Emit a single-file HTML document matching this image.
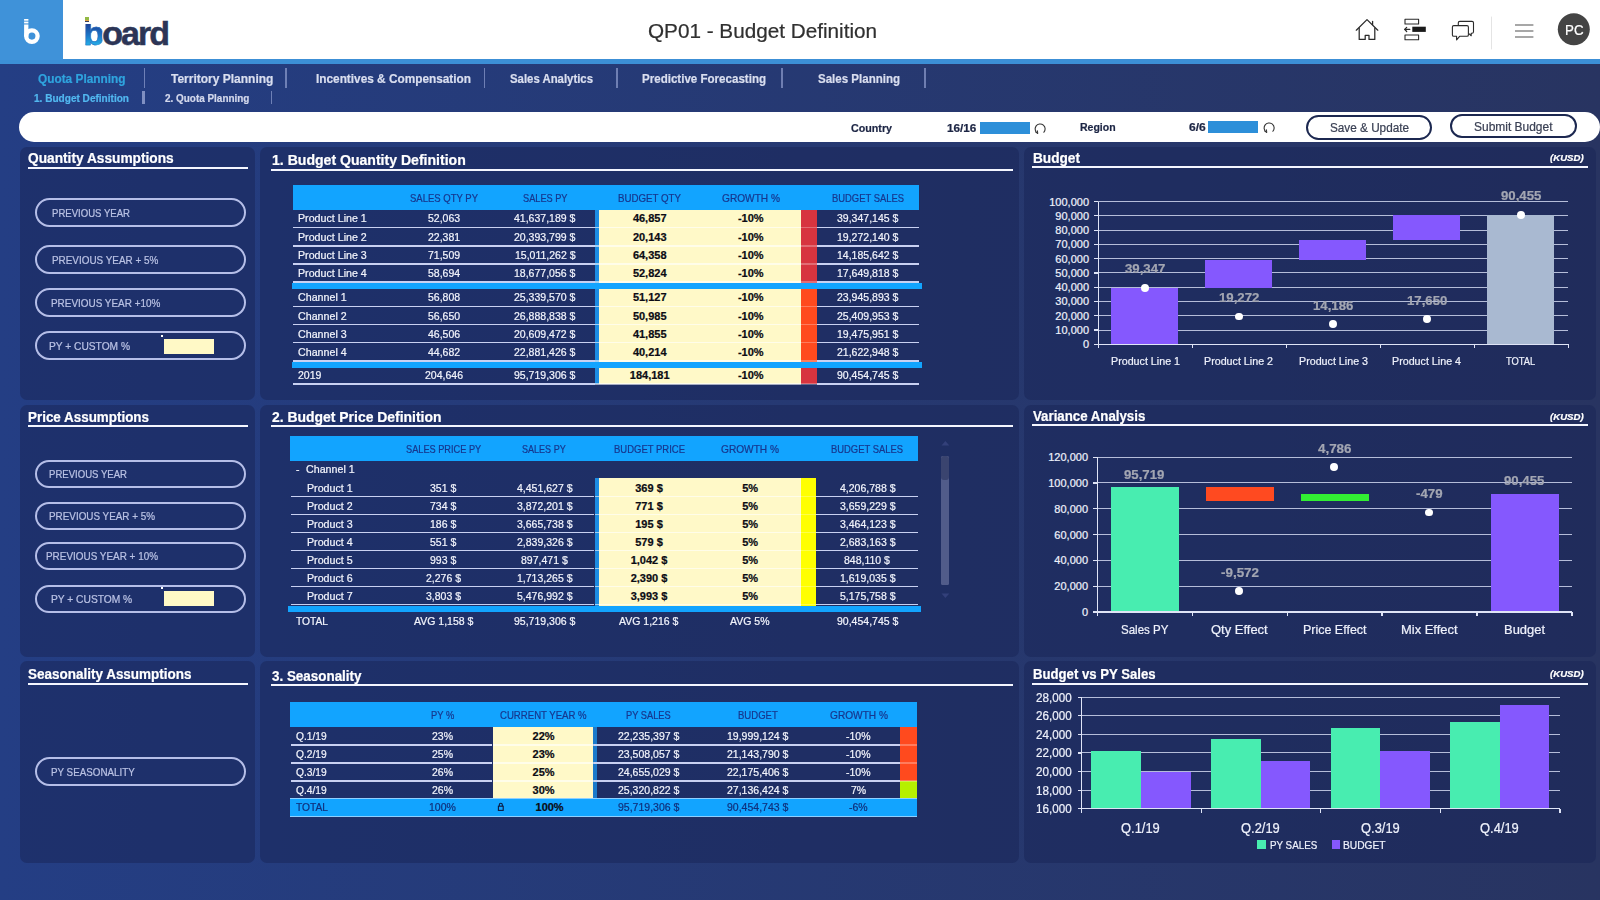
<!DOCTYPE html>
<html lang="en"><head><meta charset="utf-8"><title>QP01 - Budget Definition</title>
<style>
html,body{margin:0;padding:0;}
body{width:1600px;height:900px;overflow:hidden;position:relative;font-family:"Liberation Sans",sans-serif;background:linear-gradient(90deg,#243e84 0%,#283461 100%);}
#root{position:absolute;left:0;top:0;width:1600px;height:900px;overflow:hidden;}
#root div,#root span.t,#root svg{position:absolute;}
span.t{white-space:nowrap;line-height:1;transform-origin:0 50%;display:block;-webkit-text-stroke:0.22px currentColor;}
</style></head><body><div id="root">
<div style="left:0.00px;top:0.00px;width:1600.00px;height:59.00px;background:#fff;"></div>
<div style="left:0.00px;top:59.00px;width:1600.00px;height:5.00px;background:#3c8fd6;"></div>
<div style="left:0.00px;top:0.00px;width:63.00px;height:60.00px;background:#3f92d9;"></div>
<svg style="left:20px;top:16px" width="24" height="30" viewBox="20 16 24 30">
<rect x="24.1" y="24.5" width="4.3" height="12" fill="#fff"/>
<circle cx="31.9" cy="36.1" r="5.7" fill="none" stroke="#fff" stroke-width="4.3"/>
<rect x="24.1" y="19" width="4.3" height="1.7" fill="#fff"/><rect x="24.1" y="21.6" width="4.3" height="1.8" fill="#fff"/>
</svg>
<span class="t" style="left:83.4px;top:16.3px;font-size:34px;font-weight:700;letter-spacing:-1.95px;color:#2c3556;-webkit-text-stroke:0.5px #2c3556;"><span style="background:linear-gradient(180deg,#1d3a8f 23%,#1c74c6 55%,#25b8ec 86%);-webkit-background-clip:text;background-clip:text;color:transparent;-webkit-text-fill-color:transparent;-webkit-text-stroke:0.5px #1f6fc2;">b</span>oard</span>
<div style="left:84.00px;top:15.00px;width:8.00px;height:8.50px;background:#fff;"></div>
<div style="left:84.90px;top:17.10px;width:4.30px;height:2.50px;background:#93b944;"></div>
<div style="left:84.90px;top:19.90px;width:4.30px;height:1.20px;background:#e0a040;"></div>
<div style="left:84.90px;top:21.30px;width:4.30px;height:1.20px;background:#3a3f5e;"></div>
<span class="t" style="left:647.70px;top:20.73px;font-size:20px;color:#303030;transform:scaleX(1.0351);">QP01 - Budget Definition</span>
<svg style="left:1350px;top:12px" width="250" height="40" viewBox="1350 12 250 40" fill="none" stroke="#2a2a2a" stroke-width="1.25" stroke-linecap="round" stroke-linejoin="round">
<path d="M1356.3 30.2 L1367 19.6 L1377.8 30.2"/><path d="M1359.2 28 V39.4 H1365.2 V35.3 H1369 V39.4 H1374.8 V28"/><path d="M1372.6 24.6 V21.4"/>
<rect x="1405" y="19.2" width="13.6" height="4.8" stroke-width="1.1"/><rect x="1405" y="35" width="13.6" height="4.8" stroke-width="1.1"/>
<rect x="1412.3" y="26.7" width="13.5" height="5.2" fill="#1a1a1a" stroke="none"/><path d="M1409.8 29.4 H1404.6 M1406.7 27.3 L1404.6 29.4 L1406.7 31.5" stroke-width="1.2"/>
<path d="M1458.3 25.2 V22.8 Q1458.3 21.4 1459.8 21.4 H1472 Q1473.5 21.4 1473.5 22.8 V31.8 Q1473.5 33.2 1472 33.2 H1471.2 V35.8 L1469.4 34" stroke-width="1.1"/>
<path d="M1453.8 25.6 H1467 Q1468.4 25.6 1468.4 27 V35 Q1468.4 36.3 1467 36.3 H1459.6 L1456.6 39.9 V36.3 H1453.8 Q1452.4 36.3 1452.4 35 V27 Q1452.4 25.6 1453.8 25.6 Z" stroke-width="1.1" fill="#fff"/>
<path d="M1491.5 17 V49" stroke="#e4e4e4" stroke-width="1"/>
<path d="M1515 25 H1533.4 M1515 31 H1533.4 M1515 36.9 H1533.4" stroke="#8a8a8a" stroke-width="1.5" stroke-linecap="butt"/>
<circle cx="1573.8" cy="29.3" r="16" fill="#444" stroke="none"/>
</svg>
<span class="t" style="left:1564.55px;top:22.72px;font-size:14.5px;color:#fff;transform:scaleX(0.9184);">PC</span>
<span class="t" style="left:37.50px;top:72.54px;font-size:12px;color:#2fa4de;transform:scaleX(0.9869);font-weight:700;">Quota Planning</span>
<span class="t" style="left:171.00px;top:72.54px;font-size:12px;color:#d9deef;transform:scaleX(0.9994);font-weight:700;">Territory Planning</span>
<span class="t" style="left:316.00px;top:72.54px;font-size:12px;color:#d9deef;transform:scaleX(0.9850);font-weight:700;">Incentives &amp; Compensation</span>
<span class="t" style="left:510.00px;top:72.54px;font-size:12px;color:#d9deef;transform:scaleX(0.9474);font-weight:700;">Sales Analytics</span>
<span class="t" style="left:642.00px;top:72.54px;font-size:12px;color:#d9deef;transform:scaleX(0.9634);font-weight:700;">Predictive Forecasting</span>
<span class="t" style="left:818.00px;top:72.54px;font-size:12px;color:#d9deef;transform:scaleX(0.9606);font-weight:700;">Sales Planning</span>
<div style="left:144.00px;top:68.00px;width:1.40px;height:19.50px;background:rgba(160,174,220,0.6);"></div>
<div style="left:285.30px;top:68.00px;width:1.40px;height:19.50px;background:rgba(160,174,220,0.6);"></div>
<div style="left:483.70px;top:68.00px;width:1.40px;height:19.50px;background:rgba(160,174,220,0.6);"></div>
<div style="left:616.30px;top:68.00px;width:1.40px;height:19.50px;background:rgba(160,174,220,0.6);"></div>
<div style="left:781.30px;top:68.00px;width:1.40px;height:19.50px;background:rgba(160,174,220,0.6);"></div>
<div style="left:924.30px;top:68.00px;width:1.40px;height:19.50px;background:rgba(160,174,220,0.6);"></div>
<span class="t" style="left:33.75px;top:92.87px;font-size:10.5px;color:#52b8f0;transform:scaleX(0.9580);font-weight:700;">1. Budget Definition</span>
<div style="left:142.40px;top:90.60px;width:2.80px;height:13.80px;background:#7f8fc2;"></div>
<span class="t" style="left:165.00px;top:92.87px;font-size:10.5px;color:#d3d8ec;transform:scaleX(0.9456);font-weight:700;">2. Quota Planning</span>
<div style="left:270.60px;top:91.00px;width:1.30px;height:13.40px;background:rgba(160,174,220,0.6);"></div>
<div style="left:19.00px;top:112.00px;width:1580.50px;height:29.60px;background:#fff;border-radius:15px;"></div>
<span class="t" style="left:850.70px;top:123.23px;font-size:11px;color:#1c2544;transform:scaleX(0.9724);font-weight:700;">Country</span>
<span class="t" style="left:947.30px;top:123.23px;font-size:11px;color:#1c2544;transform:scaleX(1.0644);font-weight:700;">16/16</span>
<div style="left:979.50px;top:122.30px;width:50.30px;height:11.50px;background:#2d8fd9;"></div>
<span class="t" style="left:1079.60px;top:122.23px;font-size:11px;color:#1c2544;transform:scaleX(0.9550);font-weight:700;">Region</span>
<span class="t" style="left:1188.80px;top:122.23px;font-size:11px;color:#1c2544;transform:scaleX(1.0921);font-weight:700;">6/6</span>
<div style="left:1208.40px;top:121.40px;width:50.00px;height:11.80px;background:#2d8fd9;"></div>
<svg style="left:1032.5px;top:121.6px" width="14" height="14" viewBox="-7 -7 14 14" fill="none" stroke="#333" stroke-width="1.1"><path d="M-2.2 4.4 A5 5 0 1 1 3.6 3.6"/><path d="M-5 2.6 L-2.2 4.6 L-2.6 1.4" stroke-width="1"/></svg>
<svg style="left:1261.8px;top:120.6px" width="14" height="14" viewBox="-7 -7 14 14" fill="none" stroke="#333" stroke-width="1.1"><path d="M-2.2 4.4 A5 5 0 1 1 3.6 3.6"/><path d="M-5 2.6 L-2.2 4.6 L-2.6 1.4" stroke-width="1"/></svg>
<div style="left:1306px;top:115px;width:122.4px;height:20.5px;border:2px solid #1c2850;border-radius:13px;"></div>
<span class="t" style="left:1329.70px;top:122.44px;font-size:12px;color:#3a4054;transform:scaleX(0.9787);">Save &amp; Update</span>
<div style="left:1450px;top:113.8px;width:122.5px;height:20.5px;border:2px solid #1c2850;border-radius:13px;"></div>
<span class="t" style="left:1474.00px;top:121.34px;font-size:12px;color:#3a4054;transform:scaleX(0.9973);">Submit Budget</span>
<div style="left:20.00px;top:147.00px;width:235.30px;height:253.30px;background:rgba(24,36,86,0.5);border-radius:7px;"></div>
<div style="left:20.00px;top:405.00px;width:235.30px;height:252.00px;background:rgba(24,36,86,0.5);border-radius:7px;"></div>
<div style="left:20.00px;top:661.00px;width:235.30px;height:201.60px;background:rgba(24,36,86,0.5);border-radius:7px;"></div>
<div style="left:259.80px;top:147.00px;width:759.50px;height:253.30px;background:rgba(24,36,86,0.5);border-radius:7px;"></div>
<div style="left:259.80px;top:405.00px;width:759.50px;height:252.00px;background:rgba(24,36,86,0.5);border-radius:7px;"></div>
<div style="left:259.80px;top:661.00px;width:759.50px;height:201.60px;background:rgba(24,36,86,0.5);border-radius:7px;"></div>
<div style="left:1023.80px;top:147.00px;width:572.20px;height:253.30px;background:rgba(24,36,86,0.5);border-radius:7px;"></div>
<div style="left:1023.80px;top:405.00px;width:572.20px;height:252.00px;background:rgba(24,36,86,0.5);border-radius:7px;"></div>
<div style="left:1023.80px;top:661.00px;width:572.20px;height:201.60px;background:rgba(24,36,86,0.5);border-radius:7px;"></div>
<span class="t" style="left:28.30px;top:151.36px;font-size:14px;color:#fff;transform:scaleX(0.9790);font-weight:700;">Quantity Assumptions</span>
<div style="left:28.00px;top:167.20px;width:219.50px;height:2.00px;background:#f4f6ff;"></div>
<span class="t" style="left:272.00px;top:152.66px;font-size:14px;color:#fff;transform:scaleX(1.0045);font-weight:700;">1. Budget Quantity Definition</span>
<div style="left:271.00px;top:168.60px;width:742.40px;height:2.00px;background:#f4f6ff;"></div>
<span class="t" style="left:1032.70px;top:150.96px;font-size:14px;color:#fff;transform:scaleX(0.9748);font-weight:700;">Budget</span>
<div style="left:1032.00px;top:166.30px;width:556.30px;height:2.00px;background:#f4f6ff;"></div>
<span class="t" style="left:28.30px;top:409.76px;font-size:14px;color:#fff;transform:scaleX(0.9581);font-weight:700;">Price Assumptions</span>
<div style="left:28.00px;top:424.60px;width:219.50px;height:2.00px;background:#f4f6ff;"></div>
<span class="t" style="left:271.50px;top:409.96px;font-size:14px;color:#fff;transform:scaleX(0.9950);font-weight:700;">2. Budget Price Definition</span>
<div style="left:271.00px;top:424.60px;width:742.40px;height:2.00px;background:#f4f6ff;"></div>
<span class="t" style="left:1032.70px;top:409.36px;font-size:14px;color:#fff;transform:scaleX(0.9472);font-weight:700;">Variance Analysis</span>
<div style="left:1032.00px;top:423.70px;width:556.30px;height:2.00px;background:#f4f6ff;"></div>
<span class="t" style="left:28.30px;top:667.26px;font-size:14px;color:#fff;transform:scaleX(0.9626);font-weight:700;">Seasonality Assumptions</span>
<div style="left:28.00px;top:682.90px;width:219.50px;height:2.00px;background:#f4f6ff;"></div>
<span class="t" style="left:271.50px;top:668.86px;font-size:14px;color:#fff;transform:scaleX(0.9585);font-weight:700;">3. Seasonality</span>
<div style="left:271.00px;top:683.60px;width:742.40px;height:2.00px;background:#f4f6ff;"></div>
<span class="t" style="left:1032.70px;top:667.36px;font-size:14px;color:#fff;transform:scaleX(0.9390);font-weight:700;">Budget vs PY Sales</span>
<div style="left:1032.00px;top:682.80px;width:556.30px;height:2.00px;background:#f4f6ff;"></div>
<span class="t" style="left:1550.00px;top:153.36px;font-size:9.5px;color:#fff;transform:scaleX(1.0107);font-weight:700;font-style:italic;">(KUSD)</span>
<span class="t" style="left:1550.00px;top:411.66px;font-size:9.5px;color:#fff;transform:scaleX(1.0107);font-weight:700;font-style:italic;">(KUSD)</span>
<span class="t" style="left:1550.00px;top:668.96px;font-size:9.5px;color:#fff;transform:scaleX(1.0107);font-weight:700;font-style:italic;">(KUSD)</span>
<div style="left:35px;top:198.30px;width:207px;height:24.5px;border:2px solid #b5bee8;border-radius:15px;"></div>
<span class="t" style="left:51.70px;top:207.97px;font-size:10.5px;color:#bac2e4;transform:scaleX(0.9114);">PREVIOUS YEAR</span>
<div style="left:35px;top:245.00px;width:207px;height:24.5px;border:2px solid #b5bee8;border-radius:15px;"></div>
<span class="t" style="left:51.70px;top:254.67px;font-size:10.5px;color:#bac2e4;transform:scaleX(0.9430);">PREVIOUS YEAR + 5%</span>
<div style="left:35px;top:288.40px;width:207px;height:24.5px;border:2px solid #b5bee8;border-radius:15px;"></div>
<span class="t" style="left:51.30px;top:298.07px;font-size:10.5px;color:#bac2e4;transform:scaleX(0.9451);">PREVIOUS YEAR +10%</span>
<div style="left:35px;top:331.20px;width:207px;height:24.5px;border:2px solid #b5bee8;border-radius:15px;"></div>
<span class="t" style="left:49.00px;top:340.87px;font-size:10.5px;color:#bac2e4;transform:scaleX(0.9719);">PY + CUSTOM %</span>
<div style="left:164.00px;top:338.70px;width:49.60px;height:15.60px;background:#fff9c6;"></div>
<div style="left:160.80px;top:335.30px;width:1.80px;height:1.80px;background:#fff;"></div>
<div style="left:35px;top:459.60px;width:207px;height:24.5px;border:2px solid #b5bee8;border-radius:15px;"></div>
<span class="t" style="left:49.00px;top:469.27px;font-size:10.5px;color:#bac2e4;transform:scaleX(0.9114);">PREVIOUS YEAR</span>
<div style="left:35px;top:501.70px;width:207px;height:24.5px;border:2px solid #b5bee8;border-radius:15px;"></div>
<span class="t" style="left:49.00px;top:511.37px;font-size:10.5px;color:#bac2e4;transform:scaleX(0.9403);">PREVIOUS YEAR + 5%</span>
<div style="left:35px;top:541.80px;width:207px;height:24.5px;border:2px solid #b5bee8;border-radius:15px;"></div>
<span class="t" style="left:45.70px;top:551.47px;font-size:10.5px;color:#bac2e4;transform:scaleX(0.9446);">PREVIOUS YEAR + 10%</span>
<div style="left:35px;top:584.50px;width:207px;height:24.5px;border:2px solid #b5bee8;border-radius:15px;"></div>
<span class="t" style="left:51.30px;top:594.17px;font-size:10.5px;color:#bac2e4;transform:scaleX(0.9743);">PY + CUSTOM %</span>
<div style="left:164.00px;top:590.50px;width:49.60px;height:15.60px;background:#fff9c6;"></div>
<div style="left:160.80px;top:587.20px;width:1.80px;height:1.80px;background:#fff;"></div>
<div style="left:35px;top:757.20px;width:207px;height:24.5px;border:2px solid #b5bee8;border-radius:15px;"></div>
<span class="t" style="left:51.30px;top:766.87px;font-size:10.5px;color:#bac2e4;transform:scaleX(0.9334);">PY SEASONALITY</span>
<div style="left:292.50px;top:185.30px;width:626.50px;height:24.40px;background:#12a4ff;"></div>
<span class="t" style="left:410.20px;top:192.87px;font-size:10.5px;color:#17378e;transform:scaleX(0.9056);">SALES QTY PY</span>
<span class="t" style="left:522.55px;top:192.87px;font-size:10.5px;color:#17378e;transform:scaleX(0.8764);">SALES PY</span>
<span class="t" style="left:618.30px;top:192.87px;font-size:10.5px;color:#17378e;transform:scaleX(0.9256);">BUDGET QTY</span>
<span class="t" style="left:721.80px;top:192.87px;font-size:10.5px;color:#17378e;transform:scaleX(0.9654);">GROWTH %</span>
<span class="t" style="left:831.80px;top:192.87px;font-size:10.5px;color:#17378e;transform:scaleX(0.8962);">BUDGET SALES</span>
<div style="left:599.00px;top:209.60px;width:201.80px;height:73.80px;background:#fff9c8;"></div>
<div style="left:599.00px;top:288.90px;width:201.80px;height:73.20px;background:#fff9c8;"></div>
<div style="left:599.00px;top:367.60px;width:201.80px;height:16.60px;background:#fff9c8;"></div>
<div style="left:594.80px;top:209.60px;width:4.20px;height:174.60px;background:#1d8ce2;"></div>
<div style="left:800.80px;top:209.60px;width:16.20px;height:73.80px;background:#d7343f;"></div>
<div style="left:800.80px;top:288.90px;width:16.20px;height:73.20px;background:#ff4a1e;"></div>
<div style="left:800.80px;top:367.60px;width:16.20px;height:16.60px;background:#d7343f;"></div>
<span class="t" style="left:297.50px;top:213.43px;font-size:11px;color:#f2f4fc;transform:scaleX(0.9700);">Product Line 1</span>
<span class="t" style="left:427.93px;top:213.43px;font-size:11px;color:#f2f4fc;transform:scaleX(0.9550);">52,063</span>
<span class="t" style="left:514.33px;top:213.43px;font-size:11px;color:#f2f4fc;transform:scaleX(0.9550);">41,637,189 $</span>
<span class="t" style="left:632.88px;top:213.43px;font-size:11px;color:#0c0c14;transform:scaleX(1.0000);font-weight:700;">46,857</span>
<span class="t" style="left:737.96px;top:213.43px;font-size:11px;color:#0c0c14;transform:scaleX(1.0000);font-weight:700;">-10%</span>
<span class="t" style="left:837.13px;top:213.43px;font-size:11px;color:#f2f4fc;transform:scaleX(0.9550);">39,347,145 $</span>
<div style="left:292.50px;top:227.07px;width:302.30px;height:1.25px;background:#c9d1f2;"></div>
<div style="left:594.80px;top:227.05px;width:206.00px;height:1.30px;background:rgba(255,255,255,0.6);"></div>
<div style="left:800.80px;top:227.00px;width:16.20px;height:1.40px;background:rgba(255,255,255,0.28);"></div>
<div style="left:817.00px;top:227.07px;width:102.00px;height:1.25px;background:#c9d1f2;"></div>
<span class="t" style="left:297.50px;top:231.63px;font-size:11px;color:#f2f4fc;transform:scaleX(0.9700);">Product Line 2</span>
<span class="t" style="left:427.93px;top:231.63px;font-size:11px;color:#f2f4fc;transform:scaleX(0.9550);">22,381</span>
<span class="t" style="left:514.33px;top:231.63px;font-size:11px;color:#f2f4fc;transform:scaleX(0.9550);">20,393,799 $</span>
<span class="t" style="left:632.88px;top:231.63px;font-size:11px;color:#0c0c14;transform:scaleX(1.0000);font-weight:700;">20,143</span>
<span class="t" style="left:737.96px;top:231.63px;font-size:11px;color:#0c0c14;transform:scaleX(1.0000);font-weight:700;">-10%</span>
<span class="t" style="left:837.13px;top:231.63px;font-size:11px;color:#f2f4fc;transform:scaleX(0.9550);">19,272,140 $</span>
<div style="left:292.50px;top:245.28px;width:302.30px;height:1.25px;background:#c9d1f2;"></div>
<div style="left:594.80px;top:245.25px;width:206.00px;height:1.30px;background:rgba(255,255,255,0.6);"></div>
<div style="left:800.80px;top:245.20px;width:16.20px;height:1.40px;background:rgba(255,255,255,0.28);"></div>
<div style="left:817.00px;top:245.28px;width:102.00px;height:1.25px;background:#c9d1f2;"></div>
<span class="t" style="left:297.50px;top:249.83px;font-size:11px;color:#f2f4fc;transform:scaleX(0.9700);">Product Line 3</span>
<span class="t" style="left:427.93px;top:249.83px;font-size:11px;color:#f2f4fc;transform:scaleX(0.9550);">71,509</span>
<span class="t" style="left:514.72px;top:249.83px;font-size:11px;color:#f2f4fc;transform:scaleX(0.9550);">15,011,262 $</span>
<span class="t" style="left:632.88px;top:249.83px;font-size:11px;color:#0c0c14;transform:scaleX(1.0000);font-weight:700;">64,358</span>
<span class="t" style="left:737.96px;top:249.83px;font-size:11px;color:#0c0c14;transform:scaleX(1.0000);font-weight:700;">-10%</span>
<span class="t" style="left:837.13px;top:249.83px;font-size:11px;color:#f2f4fc;transform:scaleX(0.9550);">14,185,642 $</span>
<div style="left:292.50px;top:263.27px;width:302.30px;height:1.25px;background:#c9d1f2;"></div>
<div style="left:594.80px;top:263.25px;width:206.00px;height:1.30px;background:rgba(255,255,255,0.6);"></div>
<div style="left:800.80px;top:263.20px;width:16.20px;height:1.40px;background:rgba(255,255,255,0.28);"></div>
<div style="left:817.00px;top:263.27px;width:102.00px;height:1.25px;background:#c9d1f2;"></div>
<span class="t" style="left:297.50px;top:267.83px;font-size:11px;color:#f2f4fc;transform:scaleX(0.9700);">Product Line 4</span>
<span class="t" style="left:427.93px;top:267.83px;font-size:11px;color:#f2f4fc;transform:scaleX(0.9550);">58,694</span>
<span class="t" style="left:514.33px;top:267.83px;font-size:11px;color:#f2f4fc;transform:scaleX(0.9550);">18,677,056 $</span>
<span class="t" style="left:632.88px;top:267.83px;font-size:11px;color:#0c0c14;transform:scaleX(1.0000);font-weight:700;">52,824</span>
<span class="t" style="left:737.96px;top:267.83px;font-size:11px;color:#0c0c14;transform:scaleX(1.0000);font-weight:700;">-10%</span>
<span class="t" style="left:837.13px;top:267.83px;font-size:11px;color:#f2f4fc;transform:scaleX(0.9550);">17,649,818 $</span>
<div style="left:292.50px;top:281.27px;width:302.30px;height:1.25px;background:#c9d1f2;"></div>
<div style="left:594.80px;top:281.25px;width:206.00px;height:1.30px;background:rgba(255,255,255,0.6);"></div>
<div style="left:800.80px;top:281.20px;width:16.20px;height:1.40px;background:rgba(255,255,255,0.28);"></div>
<div style="left:817.00px;top:281.27px;width:102.00px;height:1.25px;background:#c9d1f2;"></div>
<span class="t" style="left:297.50px;top:292.33px;font-size:11px;color:#f2f4fc;transform:scaleX(0.9700);">Channel 1</span>
<span class="t" style="left:427.93px;top:292.33px;font-size:11px;color:#f2f4fc;transform:scaleX(0.9550);">56,808</span>
<span class="t" style="left:514.33px;top:292.33px;font-size:11px;color:#f2f4fc;transform:scaleX(0.9550);">25,339,570 $</span>
<span class="t" style="left:632.88px;top:292.33px;font-size:11px;color:#0c0c14;transform:scaleX(1.0000);font-weight:700;">51,127</span>
<span class="t" style="left:737.96px;top:292.33px;font-size:11px;color:#0c0c14;transform:scaleX(1.0000);font-weight:700;">-10%</span>
<span class="t" style="left:837.13px;top:292.33px;font-size:11px;color:#f2f4fc;transform:scaleX(0.9550);">23,945,893 $</span>
<div style="left:292.50px;top:305.98px;width:302.30px;height:1.25px;background:#c9d1f2;"></div>
<div style="left:594.80px;top:305.95px;width:206.00px;height:1.30px;background:rgba(255,255,255,0.6);"></div>
<div style="left:800.80px;top:305.90px;width:16.20px;height:1.40px;background:rgba(255,255,255,0.28);"></div>
<div style="left:817.00px;top:305.98px;width:102.00px;height:1.25px;background:#c9d1f2;"></div>
<span class="t" style="left:297.50px;top:310.53px;font-size:11px;color:#f2f4fc;transform:scaleX(0.9700);">Channel 2</span>
<span class="t" style="left:427.93px;top:310.53px;font-size:11px;color:#f2f4fc;transform:scaleX(0.9550);">56,650</span>
<span class="t" style="left:514.33px;top:310.53px;font-size:11px;color:#f2f4fc;transform:scaleX(0.9550);">26,888,838 $</span>
<span class="t" style="left:632.88px;top:310.53px;font-size:11px;color:#0c0c14;transform:scaleX(1.0000);font-weight:700;">50,985</span>
<span class="t" style="left:737.96px;top:310.53px;font-size:11px;color:#0c0c14;transform:scaleX(1.0000);font-weight:700;">-10%</span>
<span class="t" style="left:837.13px;top:310.53px;font-size:11px;color:#f2f4fc;transform:scaleX(0.9550);">25,409,953 $</span>
<div style="left:292.50px;top:323.98px;width:302.30px;height:1.25px;background:#c9d1f2;"></div>
<div style="left:594.80px;top:323.95px;width:206.00px;height:1.30px;background:rgba(255,255,255,0.6);"></div>
<div style="left:800.80px;top:323.90px;width:16.20px;height:1.40px;background:rgba(255,255,255,0.28);"></div>
<div style="left:817.00px;top:323.98px;width:102.00px;height:1.25px;background:#c9d1f2;"></div>
<span class="t" style="left:297.50px;top:328.73px;font-size:11px;color:#f2f4fc;transform:scaleX(0.9700);">Channel 3</span>
<span class="t" style="left:427.93px;top:328.73px;font-size:11px;color:#f2f4fc;transform:scaleX(0.9550);">46,506</span>
<span class="t" style="left:514.33px;top:328.73px;font-size:11px;color:#f2f4fc;transform:scaleX(0.9550);">20,609,472 $</span>
<span class="t" style="left:632.88px;top:328.73px;font-size:11px;color:#0c0c14;transform:scaleX(1.0000);font-weight:700;">41,855</span>
<span class="t" style="left:737.96px;top:328.73px;font-size:11px;color:#0c0c14;transform:scaleX(1.0000);font-weight:700;">-10%</span>
<span class="t" style="left:837.13px;top:328.73px;font-size:11px;color:#f2f4fc;transform:scaleX(0.9550);">19,475,951 $</span>
<div style="left:292.50px;top:342.07px;width:302.30px;height:1.25px;background:#c9d1f2;"></div>
<div style="left:594.80px;top:342.05px;width:206.00px;height:1.30px;background:rgba(255,255,255,0.6);"></div>
<div style="left:800.80px;top:342.00px;width:16.20px;height:1.40px;background:rgba(255,255,255,0.28);"></div>
<div style="left:817.00px;top:342.07px;width:102.00px;height:1.25px;background:#c9d1f2;"></div>
<span class="t" style="left:297.50px;top:346.73px;font-size:11px;color:#f2f4fc;transform:scaleX(0.9700);">Channel 4</span>
<span class="t" style="left:427.93px;top:346.73px;font-size:11px;color:#f2f4fc;transform:scaleX(0.9550);">44,682</span>
<span class="t" style="left:514.33px;top:346.73px;font-size:11px;color:#f2f4fc;transform:scaleX(0.9550);">22,881,426 $</span>
<span class="t" style="left:632.88px;top:346.73px;font-size:11px;color:#0c0c14;transform:scaleX(1.0000);font-weight:700;">40,214</span>
<span class="t" style="left:737.96px;top:346.73px;font-size:11px;color:#0c0c14;transform:scaleX(1.0000);font-weight:700;">-10%</span>
<span class="t" style="left:837.13px;top:346.73px;font-size:11px;color:#f2f4fc;transform:scaleX(0.9550);">21,622,948 $</span>
<div style="left:292.50px;top:360.27px;width:302.30px;height:1.25px;background:#c9d1f2;"></div>
<div style="left:594.80px;top:360.25px;width:206.00px;height:1.30px;background:rgba(255,255,255,0.6);"></div>
<div style="left:800.80px;top:360.20px;width:16.20px;height:1.40px;background:rgba(255,255,255,0.28);"></div>
<div style="left:817.00px;top:360.27px;width:102.00px;height:1.25px;background:#c9d1f2;"></div>
<span class="t" style="left:297.50px;top:370.23px;font-size:11px;color:#f2f4fc;transform:scaleX(0.9550);">2019</span>
<span class="t" style="left:425.01px;top:370.23px;font-size:11px;color:#f2f4fc;transform:scaleX(0.9550);">204,646</span>
<span class="t" style="left:514.33px;top:370.23px;font-size:11px;color:#f2f4fc;transform:scaleX(0.9550);">95,719,306 $</span>
<span class="t" style="left:629.82px;top:370.23px;font-size:11px;color:#0c0c14;transform:scaleX(1.0000);font-weight:700;">184,181</span>
<span class="t" style="left:737.96px;top:370.23px;font-size:11px;color:#0c0c14;transform:scaleX(1.0000);font-weight:700;">-10%</span>
<span class="t" style="left:837.13px;top:370.23px;font-size:11px;color:#f2f4fc;transform:scaleX(0.9550);">90,454,745 $</span>
<div style="left:292.50px;top:383.48px;width:302.30px;height:1.25px;background:#c9d1f2;"></div>
<div style="left:594.80px;top:383.45px;width:206.00px;height:1.30px;background:rgba(255,255,255,0.6);"></div>
<div style="left:800.80px;top:383.40px;width:16.20px;height:1.40px;background:rgba(255,255,255,0.28);"></div>
<div style="left:817.00px;top:383.48px;width:102.00px;height:1.25px;background:#c9d1f2;"></div>
<div style="left:291.50px;top:283.30px;width:630.00px;height:5.70px;background:#12a4ff;"></div>
<div style="left:291.50px;top:362.00px;width:630.00px;height:5.70px;background:#12a4ff;"></div>
<div style="left:289.80px;top:435.80px;width:628.60px;height:24.80px;background:#12a4ff;"></div>
<span class="t" style="left:405.70px;top:443.87px;font-size:10.5px;color:#17378e;transform:scaleX(0.8766);">SALES PRICE PY</span>
<span class="t" style="left:522.45px;top:443.87px;font-size:10.5px;color:#17378e;transform:scaleX(0.8606);">SALES PY</span>
<span class="t" style="left:613.50px;top:443.87px;font-size:10.5px;color:#17378e;transform:scaleX(0.9036);">BUDGET PRICE</span>
<span class="t" style="left:721.20px;top:443.87px;font-size:10.5px;color:#17378e;transform:scaleX(0.9654);">GROWTH %</span>
<span class="t" style="left:831.30px;top:443.87px;font-size:10.5px;color:#17378e;transform:scaleX(0.8962);">BUDGET SALES</span>
<div style="left:598.70px;top:477.80px;width:202.10px;height:128.40px;background:#fff9c8;"></div>
<div style="left:594.50px;top:477.80px;width:4.20px;height:128.40px;background:#1d8ce2;"></div>
<div style="left:800.80px;top:477.80px;width:15.60px;height:128.40px;background:#ffff00;"></div>
<span class="t" style="left:296.00px;top:464.23px;font-size:11px;color:#f2f4fc;transform:scaleX(0.9550);">-</span>
<span class="t" style="left:306.40px;top:464.23px;font-size:11px;color:#f2f4fc;transform:scaleX(0.9700);">Channel 1</span>
<span class="t" style="left:307.40px;top:482.73px;font-size:11px;color:#f2f4fc;transform:scaleX(0.9700);">Product 1</span>
<span class="t" style="left:430.16px;top:482.73px;font-size:11px;color:#f2f4fc;transform:scaleX(0.9550);">351 $</span>
<span class="t" style="left:516.55px;top:482.73px;font-size:11px;color:#f2f4fc;transform:scaleX(0.9550);">4,451,627 $</span>
<span class="t" style="left:635.24px;top:482.73px;font-size:11px;color:#0c0c14;transform:scaleX(1.0000);font-weight:700;">369 $</span>
<span class="t" style="left:742.25px;top:482.73px;font-size:11px;color:#0c0c14;transform:scaleX(1.0000);font-weight:700;">5%</span>
<span class="t" style="left:839.55px;top:482.73px;font-size:11px;color:#f2f4fc;transform:scaleX(0.9550);">4,206,788 $</span>
<div style="left:291.30px;top:496.07px;width:303.20px;height:1.25px;background:#c9d1f2;"></div>
<div style="left:594.50px;top:496.05px;width:206.30px;height:1.30px;background:rgba(255,255,255,0.6);"></div>
<div style="left:800.80px;top:496.00px;width:15.60px;height:1.40px;background:rgba(255,255,255,0.28);"></div>
<div style="left:816.40px;top:496.07px;width:102.00px;height:1.25px;background:#c9d1f2;"></div>
<span class="t" style="left:307.40px;top:500.76px;font-size:11px;color:#f2f4fc;transform:scaleX(0.9700);">Product 2</span>
<span class="t" style="left:430.16px;top:500.76px;font-size:11px;color:#f2f4fc;transform:scaleX(0.9550);">734 $</span>
<span class="t" style="left:516.55px;top:500.76px;font-size:11px;color:#f2f4fc;transform:scaleX(0.9550);">3,872,201 $</span>
<span class="t" style="left:635.24px;top:500.76px;font-size:11px;color:#0c0c14;transform:scaleX(1.0000);font-weight:700;">771 $</span>
<span class="t" style="left:742.25px;top:500.76px;font-size:11px;color:#0c0c14;transform:scaleX(1.0000);font-weight:700;">5%</span>
<span class="t" style="left:839.55px;top:500.76px;font-size:11px;color:#f2f4fc;transform:scaleX(0.9550);">3,659,229 $</span>
<div style="left:291.30px;top:514.08px;width:303.20px;height:1.25px;background:#c9d1f2;"></div>
<div style="left:594.50px;top:514.05px;width:206.30px;height:1.30px;background:rgba(255,255,255,0.6);"></div>
<div style="left:800.80px;top:514.00px;width:15.60px;height:1.40px;background:rgba(255,255,255,0.28);"></div>
<div style="left:816.40px;top:514.08px;width:102.00px;height:1.25px;background:#c9d1f2;"></div>
<span class="t" style="left:307.40px;top:518.79px;font-size:11px;color:#f2f4fc;transform:scaleX(0.9700);">Product 3</span>
<span class="t" style="left:430.16px;top:518.79px;font-size:11px;color:#f2f4fc;transform:scaleX(0.9550);">186 $</span>
<span class="t" style="left:516.55px;top:518.79px;font-size:11px;color:#f2f4fc;transform:scaleX(0.9550);">3,665,738 $</span>
<span class="t" style="left:635.24px;top:518.79px;font-size:11px;color:#0c0c14;transform:scaleX(1.0000);font-weight:700;">195 $</span>
<span class="t" style="left:742.25px;top:518.79px;font-size:11px;color:#0c0c14;transform:scaleX(1.0000);font-weight:700;">5%</span>
<span class="t" style="left:839.55px;top:518.79px;font-size:11px;color:#f2f4fc;transform:scaleX(0.9550);">3,464,123 $</span>
<div style="left:291.30px;top:532.08px;width:303.20px;height:1.25px;background:#c9d1f2;"></div>
<div style="left:594.50px;top:532.05px;width:206.30px;height:1.30px;background:rgba(255,255,255,0.6);"></div>
<div style="left:800.80px;top:532.00px;width:15.60px;height:1.40px;background:rgba(255,255,255,0.28);"></div>
<div style="left:816.40px;top:532.08px;width:102.00px;height:1.25px;background:#c9d1f2;"></div>
<span class="t" style="left:307.40px;top:536.82px;font-size:11px;color:#f2f4fc;transform:scaleX(0.9700);">Product 4</span>
<span class="t" style="left:430.16px;top:536.82px;font-size:11px;color:#f2f4fc;transform:scaleX(0.9550);">551 $</span>
<span class="t" style="left:516.55px;top:536.82px;font-size:11px;color:#f2f4fc;transform:scaleX(0.9550);">2,839,326 $</span>
<span class="t" style="left:635.24px;top:536.82px;font-size:11px;color:#0c0c14;transform:scaleX(1.0000);font-weight:700;">579 $</span>
<span class="t" style="left:742.25px;top:536.82px;font-size:11px;color:#0c0c14;transform:scaleX(1.0000);font-weight:700;">5%</span>
<span class="t" style="left:839.55px;top:536.82px;font-size:11px;color:#f2f4fc;transform:scaleX(0.9550);">2,683,163 $</span>
<div style="left:291.30px;top:550.08px;width:303.20px;height:1.25px;background:#c9d1f2;"></div>
<div style="left:594.50px;top:550.05px;width:206.30px;height:1.30px;background:rgba(255,255,255,0.6);"></div>
<div style="left:800.80px;top:550.00px;width:15.60px;height:1.40px;background:rgba(255,255,255,0.28);"></div>
<div style="left:816.40px;top:550.08px;width:102.00px;height:1.25px;background:#c9d1f2;"></div>
<span class="t" style="left:307.40px;top:554.85px;font-size:11px;color:#f2f4fc;transform:scaleX(0.9700);">Product 5</span>
<span class="t" style="left:430.16px;top:554.85px;font-size:11px;color:#f2f4fc;transform:scaleX(0.9550);">993 $</span>
<span class="t" style="left:520.93px;top:554.85px;font-size:11px;color:#f2f4fc;transform:scaleX(0.9550);">897,471 $</span>
<span class="t" style="left:630.65px;top:554.85px;font-size:11px;color:#0c0c14;transform:scaleX(1.0000);font-weight:700;">1,042 $</span>
<span class="t" style="left:742.25px;top:554.85px;font-size:11px;color:#0c0c14;transform:scaleX(1.0000);font-weight:700;">5%</span>
<span class="t" style="left:844.32px;top:554.85px;font-size:11px;color:#f2f4fc;transform:scaleX(0.9550);">848,110 $</span>
<div style="left:291.30px;top:568.08px;width:303.20px;height:1.25px;background:#c9d1f2;"></div>
<div style="left:594.50px;top:568.05px;width:206.30px;height:1.30px;background:rgba(255,255,255,0.6);"></div>
<div style="left:800.80px;top:568.00px;width:15.60px;height:1.40px;background:rgba(255,255,255,0.28);"></div>
<div style="left:816.40px;top:568.08px;width:102.00px;height:1.25px;background:#c9d1f2;"></div>
<span class="t" style="left:307.40px;top:572.88px;font-size:11px;color:#f2f4fc;transform:scaleX(0.9700);">Product 6</span>
<span class="t" style="left:425.78px;top:572.88px;font-size:11px;color:#f2f4fc;transform:scaleX(0.9550);">2,276 $</span>
<span class="t" style="left:516.55px;top:572.88px;font-size:11px;color:#f2f4fc;transform:scaleX(0.9550);">1,713,265 $</span>
<span class="t" style="left:630.65px;top:572.88px;font-size:11px;color:#0c0c14;transform:scaleX(1.0000);font-weight:700;">2,390 $</span>
<span class="t" style="left:742.25px;top:572.88px;font-size:11px;color:#0c0c14;transform:scaleX(1.0000);font-weight:700;">5%</span>
<span class="t" style="left:839.55px;top:572.88px;font-size:11px;color:#f2f4fc;transform:scaleX(0.9550);">1,619,035 $</span>
<div style="left:291.30px;top:586.08px;width:303.20px;height:1.25px;background:#c9d1f2;"></div>
<div style="left:594.50px;top:586.05px;width:206.30px;height:1.30px;background:rgba(255,255,255,0.6);"></div>
<div style="left:800.80px;top:586.00px;width:15.60px;height:1.40px;background:rgba(255,255,255,0.28);"></div>
<div style="left:816.40px;top:586.08px;width:102.00px;height:1.25px;background:#c9d1f2;"></div>
<span class="t" style="left:307.40px;top:590.91px;font-size:11px;color:#f2f4fc;transform:scaleX(0.9700);">Product 7</span>
<span class="t" style="left:425.78px;top:590.91px;font-size:11px;color:#f2f4fc;transform:scaleX(0.9550);">3,803 $</span>
<span class="t" style="left:516.55px;top:590.91px;font-size:11px;color:#f2f4fc;transform:scaleX(0.9550);">5,476,992 $</span>
<span class="t" style="left:630.65px;top:590.91px;font-size:11px;color:#0c0c14;transform:scaleX(1.0000);font-weight:700;">3,993 $</span>
<span class="t" style="left:742.25px;top:590.91px;font-size:11px;color:#0c0c14;transform:scaleX(1.0000);font-weight:700;">5%</span>
<span class="t" style="left:839.55px;top:590.91px;font-size:11px;color:#f2f4fc;transform:scaleX(0.9550);">5,175,758 $</span>
<div style="left:291.30px;top:604.08px;width:303.20px;height:1.25px;background:#c9d1f2;"></div>
<div style="left:594.50px;top:604.05px;width:206.30px;height:1.30px;background:rgba(255,255,255,0.6);"></div>
<div style="left:800.80px;top:604.00px;width:15.60px;height:1.40px;background:rgba(255,255,255,0.28);"></div>
<div style="left:816.40px;top:604.08px;width:102.00px;height:1.25px;background:#c9d1f2;"></div>
<div style="left:288.00px;top:606.00px;width:633.40px;height:6.00px;background:#12a4ff;"></div>
<span class="t" style="left:295.80px;top:615.63px;font-size:11px;color:#f2f4fc;transform:scaleX(0.9300);">TOTAL</span>
<span class="t" style="left:413.61px;top:615.63px;font-size:11px;color:#f2f4fc;transform:scaleX(0.9550);">AVG 1,158 $</span>
<span class="t" style="left:513.63px;top:615.63px;font-size:11px;color:#f2f4fc;transform:scaleX(0.9550);">95,719,306 $</span>
<span class="t" style="left:619.31px;top:615.63px;font-size:11px;color:#f2f4fc;transform:scaleX(0.9550);">AVG 1,216 $</span>
<span class="t" style="left:730.45px;top:615.63px;font-size:11px;color:#f2f4fc;transform:scaleX(0.9550);">AVG 5%</span>
<span class="t" style="left:836.63px;top:615.63px;font-size:11px;color:#f2f4fc;transform:scaleX(0.9550);">90,454,745 $</span>
<div style="left:941.20px;top:456.30px;width:8.30px;height:128.40px;background:#515c8a;border-radius:1.5px;"></div>
<div style="left:941.40px;top:456.30px;width:8.00px;height:23.50px;background:#3a446f;border-radius:3px;"></div>
<svg style="left:940px;top:440px" width="12" height="6" viewBox="0 0 12 6"><path d="M1.5 5.5 L5.4 1 L9.3 5.5 Z" fill="#33407a"/></svg>
<svg style="left:940px;top:593px" width="12" height="6" viewBox="0 0 12 6"><path d="M1.5 0.5 L5.4 5 L9.3 0.5 Z" fill="#33407a"/></svg>
<div style="left:289.80px;top:702.30px;width:627.60px;height:24.60px;background:#12a4ff;"></div>
<span class="t" style="left:430.60px;top:710.17px;font-size:10.5px;color:#17378e;transform:scaleX(0.8899);">PY %</span>
<span class="t" style="left:500.10px;top:710.17px;font-size:10.5px;color:#17378e;transform:scaleX(0.9143);">CURRENT YEAR %</span>
<span class="t" style="left:625.85px;top:710.17px;font-size:10.5px;color:#17378e;transform:scaleX(0.8836);">PY SALES</span>
<span class="t" style="left:737.70px;top:710.17px;font-size:10.5px;color:#17378e;transform:scaleX(0.9096);">BUDGET</span>
<span class="t" style="left:829.50px;top:710.17px;font-size:10.5px;color:#17378e;transform:scaleX(0.9654);">GROWTH %</span>
<div style="left:492.50px;top:726.90px;width:101.20px;height:71.20px;background:#fff9c8;"></div>
<div style="left:593.40px;top:726.90px;width:3.40px;height:71.20px;background:#1b7acb;"></div>
<div style="left:900.00px;top:726.90px;width:17.40px;height:54.00px;background:#ff4a1e;"></div>
<div style="left:900.00px;top:780.80px;width:17.40px;height:17.30px;background:#b6f000;"></div>
<div style="left:289.80px;top:798.00px;width:627.60px;height:18.80px;background:#12a4ff;"></div>
<span class="t" style="left:295.80px;top:730.73px;font-size:11px;color:#f2f4fc;transform:scaleX(0.9300);">Q.1/19</span>
<span class="t" style="left:431.69px;top:730.73px;font-size:11px;color:#f2f4fc;transform:scaleX(0.9550);">23%</span>
<span class="t" style="left:532.59px;top:730.73px;font-size:11px;color:#0c0c14;transform:scaleX(1.0000);font-weight:700;">22%</span>
<span class="t" style="left:617.53px;top:730.73px;font-size:11px;color:#f2f4fc;transform:scaleX(0.9550);">22,235,397 $</span>
<span class="t" style="left:726.93px;top:730.73px;font-size:11px;color:#f2f4fc;transform:scaleX(0.9550);">19,999,124 $</span>
<span class="t" style="left:846.24px;top:730.73px;font-size:11px;color:#f2f4fc;transform:scaleX(0.9550);">-10%</span>
<span class="t" style="left:295.80px;top:748.93px;font-size:11px;color:#f2f4fc;transform:scaleX(0.9300);">Q.2/19</span>
<span class="t" style="left:431.69px;top:748.93px;font-size:11px;color:#f2f4fc;transform:scaleX(0.9550);">25%</span>
<span class="t" style="left:532.59px;top:748.93px;font-size:11px;color:#0c0c14;transform:scaleX(1.0000);font-weight:700;">23%</span>
<span class="t" style="left:617.53px;top:748.93px;font-size:11px;color:#f2f4fc;transform:scaleX(0.9550);">23,508,057 $</span>
<span class="t" style="left:726.93px;top:748.93px;font-size:11px;color:#f2f4fc;transform:scaleX(0.9550);">21,143,790 $</span>
<span class="t" style="left:846.24px;top:748.93px;font-size:11px;color:#f2f4fc;transform:scaleX(0.9550);">-10%</span>
<span class="t" style="left:295.80px;top:766.83px;font-size:11px;color:#f2f4fc;transform:scaleX(0.9300);">Q.3/19</span>
<span class="t" style="left:431.69px;top:766.83px;font-size:11px;color:#f2f4fc;transform:scaleX(0.9550);">26%</span>
<span class="t" style="left:532.59px;top:766.83px;font-size:11px;color:#0c0c14;transform:scaleX(1.0000);font-weight:700;">25%</span>
<span class="t" style="left:617.53px;top:766.83px;font-size:11px;color:#f2f4fc;transform:scaleX(0.9550);">24,655,029 $</span>
<span class="t" style="left:726.93px;top:766.83px;font-size:11px;color:#f2f4fc;transform:scaleX(0.9550);">22,175,406 $</span>
<span class="t" style="left:846.24px;top:766.83px;font-size:11px;color:#f2f4fc;transform:scaleX(0.9550);">-10%</span>
<span class="t" style="left:295.80px;top:784.53px;font-size:11px;color:#f2f4fc;transform:scaleX(0.9300);">Q.4/19</span>
<span class="t" style="left:431.69px;top:784.53px;font-size:11px;color:#f2f4fc;transform:scaleX(0.9550);">26%</span>
<span class="t" style="left:532.59px;top:784.53px;font-size:11px;color:#0c0c14;transform:scaleX(1.0000);font-weight:700;">30%</span>
<span class="t" style="left:617.53px;top:784.53px;font-size:11px;color:#f2f4fc;transform:scaleX(0.9550);">25,320,822 $</span>
<span class="t" style="left:726.93px;top:784.53px;font-size:11px;color:#f2f4fc;transform:scaleX(0.9550);">27,136,424 $</span>
<span class="t" style="left:850.91px;top:784.53px;font-size:11px;color:#f2f4fc;transform:scaleX(0.9550);">7%</span>
<div style="left:291.30px;top:744.38px;width:201.20px;height:1.25px;background:#c9d1f2;"></div>
<div style="left:492.50px;top:744.35px;width:101.20px;height:1.30px;background:rgba(255,255,255,0.6);"></div>
<div style="left:593.70px;top:744.38px;width:306.30px;height:1.25px;background:#c9d1f2;"></div>
<div style="left:900.00px;top:744.30px;width:17.40px;height:1.40px;background:rgba(255,255,255,0.28);"></div>
<div style="left:291.30px;top:762.38px;width:201.20px;height:1.25px;background:#c9d1f2;"></div>
<div style="left:492.50px;top:762.35px;width:101.20px;height:1.30px;background:rgba(255,255,255,0.6);"></div>
<div style="left:593.70px;top:762.38px;width:306.30px;height:1.25px;background:#c9d1f2;"></div>
<div style="left:900.00px;top:762.30px;width:17.40px;height:1.40px;background:rgba(255,255,255,0.28);"></div>
<div style="left:291.30px;top:780.27px;width:201.20px;height:1.25px;background:#c9d1f2;"></div>
<div style="left:492.50px;top:780.25px;width:101.20px;height:1.30px;background:rgba(255,255,255,0.6);"></div>
<div style="left:593.70px;top:780.27px;width:306.30px;height:1.25px;background:#c9d1f2;"></div>
<div style="left:900.00px;top:780.20px;width:17.40px;height:1.40px;background:rgba(255,255,255,0.28);"></div>
<div style="left:289.80px;top:797.60px;width:627.60px;height:1.20px;background:#8fd0ff;"></div>
<div style="left:289.80px;top:815.80px;width:627.60px;height:1.20px;background:#8fd0ff;"></div>
<span class="t" style="left:295.80px;top:802.43px;font-size:11px;color:#10307c;transform:scaleX(0.9300);">TOTAL</span>
<span class="t" style="left:428.77px;top:802.43px;font-size:11px;color:#10307c;transform:scaleX(0.9550);">100%</span>
<span class="t" style="left:535.53px;top:802.43px;font-size:11px;color:#0c0c14;transform:scaleX(1.0000);font-weight:700;">100%</span>
<span class="t" style="left:617.53px;top:802.43px;font-size:11px;color:#10307c;transform:scaleX(0.9550);">95,719,306 $</span>
<span class="t" style="left:726.93px;top:802.43px;font-size:11px;color:#10307c;transform:scaleX(0.9550);">90,454,743 $</span>
<span class="t" style="left:849.16px;top:802.43px;font-size:11px;color:#10307c;transform:scaleX(0.9550);">-6%</span>
<svg style="left:496.7px;top:802.3px" width="8" height="10" viewBox="0 0 8 10"><rect x="1.4" y="4.2" width="4.8" height="4.2" fill="none" stroke="#0c1a40" stroke-width="1.1"/><path d="M2.3 4 V2.8 A1.5 1.5 0 0 1 5.3 2.8 V4" fill="none" stroke="#0c1a40" stroke-width="1.1"/></svg>
<span class="t" style="left:1082.88px;top:339.23px;font-size:11px;color:#eef1fb;transform:scaleX(1.0000);">0</span>
<div style="left:1094.30px;top:343.70px;width:4.00px;height:1.20px;background:#dfe4f6;"></div>
<div style="left:1098.30px;top:330.00px;width:470.10px;height:1.00px;background:rgba(206,213,238,0.86);"></div>
<span class="t" style="left:1055.36px;top:324.96px;font-size:11px;color:#eef1fb;transform:scaleX(1.0000);">10,000</span>
<div style="left:1094.30px;top:329.43px;width:4.00px;height:1.20px;background:#dfe4f6;"></div>
<div style="left:1098.30px;top:315.00px;width:470.10px;height:1.00px;background:rgba(206,213,238,0.86);"></div>
<span class="t" style="left:1055.36px;top:310.69px;font-size:11px;color:#eef1fb;transform:scaleX(1.0000);">20,000</span>
<div style="left:1094.30px;top:315.16px;width:4.00px;height:1.20px;background:#dfe4f6;"></div>
<div style="left:1098.30px;top:301.00px;width:470.10px;height:1.00px;background:rgba(206,213,238,0.86);"></div>
<span class="t" style="left:1055.36px;top:296.42px;font-size:11px;color:#eef1fb;transform:scaleX(1.0000);">30,000</span>
<div style="left:1094.30px;top:300.89px;width:4.00px;height:1.20px;background:#dfe4f6;"></div>
<div style="left:1098.30px;top:287.00px;width:470.10px;height:1.00px;background:rgba(206,213,238,0.86);"></div>
<span class="t" style="left:1055.36px;top:282.15px;font-size:11px;color:#eef1fb;transform:scaleX(1.0000);">40,000</span>
<div style="left:1094.30px;top:286.62px;width:4.00px;height:1.20px;background:#dfe4f6;"></div>
<div style="left:1098.30px;top:272.00px;width:470.10px;height:1.00px;background:rgba(206,213,238,0.86);"></div>
<span class="t" style="left:1055.36px;top:267.88px;font-size:11px;color:#eef1fb;transform:scaleX(1.0000);">50,000</span>
<div style="left:1094.30px;top:272.35px;width:4.00px;height:1.20px;background:#dfe4f6;"></div>
<div style="left:1098.30px;top:258.00px;width:470.10px;height:1.00px;background:rgba(206,213,238,0.86);"></div>
<span class="t" style="left:1055.36px;top:253.61px;font-size:11px;color:#eef1fb;transform:scaleX(1.0000);">60,000</span>
<div style="left:1094.30px;top:258.08px;width:4.00px;height:1.20px;background:#dfe4f6;"></div>
<div style="left:1098.30px;top:244.00px;width:470.10px;height:1.00px;background:rgba(206,213,238,0.86);"></div>
<span class="t" style="left:1055.36px;top:239.34px;font-size:11px;color:#eef1fb;transform:scaleX(1.0000);">70,000</span>
<div style="left:1094.30px;top:243.81px;width:4.00px;height:1.20px;background:#dfe4f6;"></div>
<div style="left:1098.30px;top:230.00px;width:470.10px;height:1.00px;background:rgba(206,213,238,0.86);"></div>
<span class="t" style="left:1055.36px;top:225.07px;font-size:11px;color:#eef1fb;transform:scaleX(1.0000);">80,000</span>
<div style="left:1094.30px;top:229.54px;width:4.00px;height:1.20px;background:#dfe4f6;"></div>
<div style="left:1098.30px;top:215.00px;width:470.10px;height:1.00px;background:rgba(206,213,238,0.86);"></div>
<span class="t" style="left:1055.36px;top:210.80px;font-size:11px;color:#eef1fb;transform:scaleX(1.0000);">90,000</span>
<div style="left:1094.30px;top:215.27px;width:4.00px;height:1.20px;background:#dfe4f6;"></div>
<div style="left:1098.30px;top:201.00px;width:470.10px;height:1.00px;background:rgba(206,213,238,0.86);"></div>
<span class="t" style="left:1049.24px;top:196.53px;font-size:11px;color:#eef1fb;transform:scaleX(1.0000);">100,000</span>
<div style="left:1094.30px;top:201.00px;width:4.00px;height:1.20px;background:#dfe4f6;"></div>
<div style="left:1097.60px;top:201.60px;width:1.40px;height:146.70px;background:#dfe4f6;"></div>
<div style="left:1098.30px;top:343.60px;width:470.10px;height:1.40px;background:#dfe4f6;"></div>
<div style="left:1097.60px;top:344.30px;width:1.40px;height:4.00px;background:#dfe4f6;"></div>
<div style="left:1191.62px;top:344.30px;width:1.40px;height:4.00px;background:#dfe4f6;"></div>
<div style="left:1285.64px;top:344.30px;width:1.40px;height:4.00px;background:#dfe4f6;"></div>
<div style="left:1379.66px;top:344.30px;width:1.40px;height:4.00px;background:#dfe4f6;"></div>
<div style="left:1473.68px;top:344.30px;width:1.40px;height:4.00px;background:#dfe4f6;"></div>
<div style="left:1567.70px;top:344.30px;width:1.40px;height:4.00px;background:#dfe4f6;"></div>
<div style="left:1111.00px;top:287.60px;width:67.20px;height:56.10px;background:#8558fe;"></div>
<div style="left:1205.00px;top:260.00px;width:67.00px;height:27.60px;background:#8558fe;"></div>
<div style="left:1299.00px;top:240.20px;width:67.00px;height:19.80px;background:#8558fe;"></div>
<div style="left:1393.00px;top:215.30px;width:67.00px;height:24.90px;background:#8558fe;"></div>
<div style="left:1486.90px;top:215.30px;width:67.40px;height:128.40px;background:#a9b9d1;"></div>
<div style="left:1141.10px;top:284.10px;width:7.80px;height:7.80px;background:#fff;border-radius:50%;"></div>
<div style="left:1234.80px;top:312.70px;width:7.80px;height:7.80px;background:#fff;border-radius:50%;"></div>
<div style="left:1329.10px;top:320.30px;width:7.80px;height:7.80px;background:#fff;border-radius:50%;"></div>
<div style="left:1423.00px;top:315.20px;width:7.80px;height:7.80px;background:#fff;border-radius:50%;"></div>
<div style="left:1517.10px;top:211.10px;width:7.80px;height:7.80px;background:#fff;border-radius:50%;"></div>
<span class="t" style="left:1124.80px;top:263.39px;font-size:12.5px;color:#a3a6b2;transform:scaleX(1.0567);font-weight:700;">39,347</span>
<span class="t" style="left:1218.50px;top:291.89px;font-size:12.5px;color:#a3a6b2;transform:scaleX(1.0567);font-weight:700;">19,272</span>
<span class="t" style="left:1312.80px;top:299.89px;font-size:12.5px;color:#a3a6b2;transform:scaleX(1.0567);font-weight:700;">14,186</span>
<span class="t" style="left:1406.70px;top:294.69px;font-size:12.5px;color:#a3a6b2;transform:scaleX(1.0567);font-weight:700;">17,650</span>
<span class="t" style="left:1500.80px;top:190.39px;font-size:12.5px;color:#a3a6b2;transform:scaleX(1.0567);font-weight:700;">90,455</span>
<span class="t" style="left:1110.50px;top:355.83px;font-size:11px;color:#eef1fb;transform:scaleX(0.9727);">Product Line 1</span>
<span class="t" style="left:1204.20px;top:355.83px;font-size:11px;color:#eef1fb;transform:scaleX(0.9727);">Product Line 2</span>
<span class="t" style="left:1298.50px;top:355.83px;font-size:11px;color:#eef1fb;transform:scaleX(0.9727);">Product Line 3</span>
<span class="t" style="left:1392.40px;top:355.83px;font-size:11px;color:#eef1fb;transform:scaleX(0.9727);">Product Line 4</span>
<span class="t" style="left:1506.35px;top:355.83px;font-size:11px;color:#eef1fb;transform:scaleX(0.8509);">TOTAL</span>
<span class="t" style="left:1081.88px;top:606.93px;font-size:11px;color:#eef1fb;transform:scaleX(1.0000);">0</span>
<div style="left:1093.40px;top:611.40px;width:4.00px;height:1.20px;background:#dfe4f6;"></div>
<div style="left:1097.40px;top:586.00px;width:474.60px;height:1.00px;background:rgba(206,213,238,0.86);"></div>
<span class="t" style="left:1054.36px;top:581.13px;font-size:11px;color:#eef1fb;transform:scaleX(1.0000);">20,000</span>
<div style="left:1093.40px;top:585.60px;width:4.00px;height:1.20px;background:#dfe4f6;"></div>
<div style="left:1097.40px;top:560.00px;width:474.60px;height:1.00px;background:rgba(206,213,238,0.86);"></div>
<span class="t" style="left:1054.36px;top:555.33px;font-size:11px;color:#eef1fb;transform:scaleX(1.0000);">40,000</span>
<div style="left:1093.40px;top:559.80px;width:4.00px;height:1.20px;background:#dfe4f6;"></div>
<div style="left:1097.40px;top:534.00px;width:474.60px;height:1.00px;background:rgba(206,213,238,0.86);"></div>
<span class="t" style="left:1054.36px;top:529.53px;font-size:11px;color:#eef1fb;transform:scaleX(1.0000);">60,000</span>
<div style="left:1093.40px;top:534.00px;width:4.00px;height:1.20px;background:#dfe4f6;"></div>
<div style="left:1097.40px;top:508.00px;width:474.60px;height:1.00px;background:rgba(206,213,238,0.86);"></div>
<span class="t" style="left:1054.36px;top:503.73px;font-size:11px;color:#eef1fb;transform:scaleX(1.0000);">80,000</span>
<div style="left:1093.40px;top:508.20px;width:4.00px;height:1.20px;background:#dfe4f6;"></div>
<div style="left:1097.40px;top:482.00px;width:474.60px;height:1.00px;background:rgba(206,213,238,0.86);"></div>
<span class="t" style="left:1048.24px;top:477.93px;font-size:11px;color:#eef1fb;transform:scaleX(1.0000);">100,000</span>
<div style="left:1093.40px;top:482.40px;width:4.00px;height:1.20px;background:#dfe4f6;"></div>
<div style="left:1097.40px;top:457.00px;width:474.60px;height:1.00px;background:rgba(206,213,238,0.86);"></div>
<span class="t" style="left:1048.24px;top:452.13px;font-size:11px;color:#eef1fb;transform:scaleX(1.0000);">120,000</span>
<div style="left:1093.40px;top:456.60px;width:4.00px;height:1.20px;background:#dfe4f6;"></div>
<div style="left:1096.70px;top:457.20px;width:1.40px;height:158.80px;background:#dfe4f6;"></div>
<div style="left:1097.40px;top:611.30px;width:474.60px;height:1.40px;background:#dfe4f6;"></div>
<div style="left:1096.70px;top:612.00px;width:1.40px;height:4.00px;background:#dfe4f6;"></div>
<div style="left:1191.62px;top:612.00px;width:1.40px;height:4.00px;background:#dfe4f6;"></div>
<div style="left:1286.54px;top:612.00px;width:1.40px;height:4.00px;background:#dfe4f6;"></div>
<div style="left:1381.46px;top:612.00px;width:1.40px;height:4.00px;background:#dfe4f6;"></div>
<div style="left:1476.38px;top:612.00px;width:1.40px;height:4.00px;background:#dfe4f6;"></div>
<div style="left:1571.30px;top:612.00px;width:1.40px;height:4.00px;background:#dfe4f6;"></div>
<div style="left:1110.70px;top:487.10px;width:68.50px;height:124.20px;background:#48edb0;"></div>
<div style="left:1205.60px;top:487.10px;width:68.60px;height:13.60px;background:#ff4a20;"></div>
<div style="left:1300.80px;top:494.40px;width:68.20px;height:6.30px;background:#32ee33;"></div>
<div style="left:1490.60px;top:494.40px;width:68.50px;height:116.90px;background:#8558fe;"></div>
<div style="left:1235.40px;top:586.90px;width:7.80px;height:7.80px;background:#fff;border-radius:50%;"></div>
<div style="left:1330.40px;top:463.10px;width:7.80px;height:7.80px;background:#fff;border-radius:50%;"></div>
<div style="left:1425.30px;top:508.50px;width:7.80px;height:7.80px;background:#fff;border-radius:50%;"></div>
<span class="t" style="left:1124.40px;top:468.69px;font-size:12.5px;color:#a3a6b2;transform:scaleX(1.0567);font-weight:700;">95,719</span>
<span class="t" style="left:1221.00px;top:566.59px;font-size:12.5px;color:#a3a6b2;transform:scaleX(1.0721);font-weight:700;">-9,572</span>
<span class="t" style="left:1317.55px;top:443.09px;font-size:12.5px;color:#a3a6b2;transform:scaleX(1.0709);font-weight:700;">4,786</span>
<span class="t" style="left:1415.95px;top:488.29px;font-size:12.5px;color:#a3a6b2;transform:scaleX(1.0592);font-weight:700;">-479</span>
<span class="t" style="left:1504.40px;top:475.49px;font-size:12.5px;color:#a3a6b2;transform:scaleX(1.0567);font-weight:700;">90,455</span>
<span class="t" style="left:1121.00px;top:622.95px;font-size:13px;color:#eef1fb;transform:scaleX(0.8864);">Sales PY</span>
<span class="t" style="left:1211.05px;top:622.95px;font-size:13px;color:#eef1fb;transform:scaleX(0.9976);">Qty Effect</span>
<span class="t" style="left:1302.55px;top:622.95px;font-size:13px;color:#eef1fb;transform:scaleX(0.9588);">Price Effect</span>
<span class="t" style="left:1400.95px;top:622.95px;font-size:13px;color:#eef1fb;transform:scaleX(0.9942);">Mix Effect</span>
<span class="t" style="left:1504.10px;top:622.95px;font-size:13px;color:#eef1fb;transform:scaleX(0.9951);">Budget</span>
<span class="t" style="left:1036.40px;top:803.24px;font-size:12px;color:#eef1fb;transform:scaleX(0.9699);">16,000</span>
<div style="left:1077.60px;top:808.20px;width:4.00px;height:1.20px;background:#dfe4f6;"></div>
<div style="left:1081.60px;top:790.00px;width:478.40px;height:1.00px;background:rgba(206,213,238,0.86);"></div>
<span class="t" style="left:1036.40px;top:784.62px;font-size:12px;color:#eef1fb;transform:scaleX(0.9699);">18,000</span>
<div style="left:1077.60px;top:789.58px;width:4.00px;height:1.20px;background:#dfe4f6;"></div>
<div style="left:1081.60px;top:771.00px;width:478.40px;height:1.00px;background:rgba(206,213,238,0.86);"></div>
<span class="t" style="left:1036.40px;top:766.00px;font-size:12px;color:#eef1fb;transform:scaleX(0.9699);">20,000</span>
<div style="left:1077.60px;top:770.97px;width:4.00px;height:1.20px;background:#dfe4f6;"></div>
<div style="left:1081.60px;top:752.00px;width:478.40px;height:1.00px;background:rgba(206,213,238,0.86);"></div>
<span class="t" style="left:1036.40px;top:747.39px;font-size:12px;color:#eef1fb;transform:scaleX(0.9699);">22,000</span>
<div style="left:1077.60px;top:752.35px;width:4.00px;height:1.20px;background:#dfe4f6;"></div>
<div style="left:1081.60px;top:734.00px;width:478.40px;height:1.00px;background:rgba(206,213,238,0.86);"></div>
<span class="t" style="left:1036.40px;top:728.77px;font-size:12px;color:#eef1fb;transform:scaleX(0.9699);">24,000</span>
<div style="left:1077.60px;top:733.73px;width:4.00px;height:1.20px;background:#dfe4f6;"></div>
<div style="left:1081.60px;top:715.00px;width:478.40px;height:1.00px;background:rgba(206,213,238,0.86);"></div>
<span class="t" style="left:1036.40px;top:710.15px;font-size:12px;color:#eef1fb;transform:scaleX(0.9699);">26,000</span>
<div style="left:1077.60px;top:715.12px;width:4.00px;height:1.20px;background:#dfe4f6;"></div>
<div style="left:1081.60px;top:697.00px;width:478.40px;height:1.00px;background:rgba(206,213,238,0.86);"></div>
<span class="t" style="left:1036.40px;top:691.54px;font-size:12px;color:#eef1fb;transform:scaleX(0.9699);">28,000</span>
<div style="left:1077.60px;top:696.50px;width:4.00px;height:1.20px;background:#dfe4f6;"></div>
<div style="left:1080.90px;top:697.10px;width:1.40px;height:115.70px;background:#dfe4f6;"></div>
<div style="left:1081.60px;top:808.10px;width:478.40px;height:1.40px;background:#dfe4f6;"></div>
<div style="left:1080.90px;top:808.80px;width:1.40px;height:4.00px;background:#dfe4f6;"></div>
<div style="left:1200.50px;top:808.80px;width:1.40px;height:4.00px;background:#dfe4f6;"></div>
<div style="left:1320.10px;top:808.80px;width:1.40px;height:4.00px;background:#dfe4f6;"></div>
<div style="left:1439.70px;top:808.80px;width:1.40px;height:4.00px;background:#dfe4f6;"></div>
<div style="left:1559.30px;top:808.80px;width:1.40px;height:4.00px;background:#dfe4f6;"></div>
<div style="left:1091.40px;top:750.76px;width:49.60px;height:57.34px;background:#48edb0;"></div>
<div style="left:1141.00px;top:771.58px;width:49.60px;height:36.52px;background:#8558fe;"></div>
<span class="t" style="left:1121.40px;top:820.76px;font-size:14px;color:#eef1fb;transform:scaleX(0.9232);">Q.1/19</span>
<div style="left:1211.00px;top:738.91px;width:49.60px;height:69.19px;background:#48edb0;"></div>
<div style="left:1260.60px;top:760.92px;width:49.60px;height:47.18px;background:#8558fe;"></div>
<span class="t" style="left:1241.00px;top:820.76px;font-size:14px;color:#eef1fb;transform:scaleX(0.9232);">Q.2/19</span>
<div style="left:1330.60px;top:728.24px;width:49.60px;height:79.86px;background:#48edb0;"></div>
<div style="left:1380.20px;top:751.32px;width:49.60px;height:56.78px;background:#8558fe;"></div>
<span class="t" style="left:1360.60px;top:820.76px;font-size:14px;color:#eef1fb;transform:scaleX(0.9232);">Q.3/19</span>
<div style="left:1450.20px;top:722.04px;width:49.60px;height:86.06px;background:#48edb0;"></div>
<div style="left:1499.80px;top:705.14px;width:49.60px;height:102.96px;background:#8558fe;"></div>
<span class="t" style="left:1480.20px;top:820.76px;font-size:14px;color:#eef1fb;transform:scaleX(0.9232);">Q.4/19</span>
<div style="left:1257.40px;top:840.40px;width:8.60px;height:8.60px;background:#48edb0;"></div>
<span class="t" style="left:1270.00px;top:839.83px;font-size:11px;color:#eef1fb;transform:scaleX(0.8906);">PY SALES</span>
<div style="left:1331.80px;top:840.40px;width:8.60px;height:8.60px;background:#8558fe;"></div>
<span class="t" style="left:1343.40px;top:839.83px;font-size:11px;color:#eef1fb;transform:scaleX(0.9294);">BUDGET</span>
</div></body></html>
